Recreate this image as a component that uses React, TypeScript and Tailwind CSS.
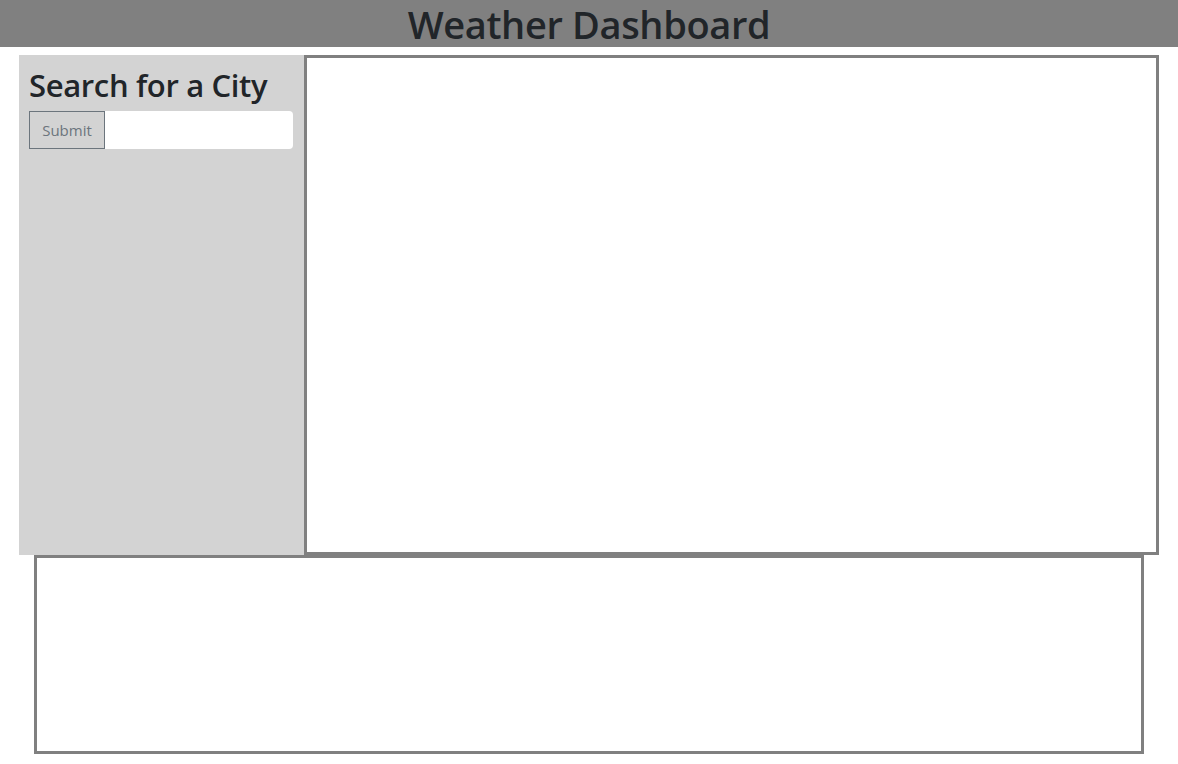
const App = () => {
  return (
    <div className="min-h-screen bg-white font-['Open_Sans',sans-serif] text-[#212529]">
      <header className="h-[47px] bg-[#808080] text-center">
        <h1 className="pt-px text-[38px] font-semibold leading-[46px] tracking-[-0.35px]">Weather Dashboard</h1>
      </header>
      <div className="mx-auto mt-2 w-[1140px]">
        <div className="flex h-[500px]">
          <aside className="w-[285px] bg-[#d3d3d3] px-[10px] pt-[12px]">
            <h2 className="text-[31px] font-semibold leading-[1.2] tracking-[-0.35px]">Search for a City</h2>
            <div className="mt-[7px] flex h-[38px] w-[264px]">
              <button className="h-full w-[76px] shrink-0 border border-[#6c757d] bg-[#d3d3d3] text-[15px] text-[#6c757d]">
                Submit
              </button>
              <input type="text" className="h-full w-0 min-w-0 flex-1 rounded-r-[4px] bg-white px-3 outline-none" />
            </div>
          </aside>
          <main className="flex-1 border-[3px] border-[#808080] bg-white" />
        </div>
        <section className="mx-[15px] h-[199px] border-[3px] border-[#808080] bg-white" />
      </div>
    </div>
  );
};

export default App;
